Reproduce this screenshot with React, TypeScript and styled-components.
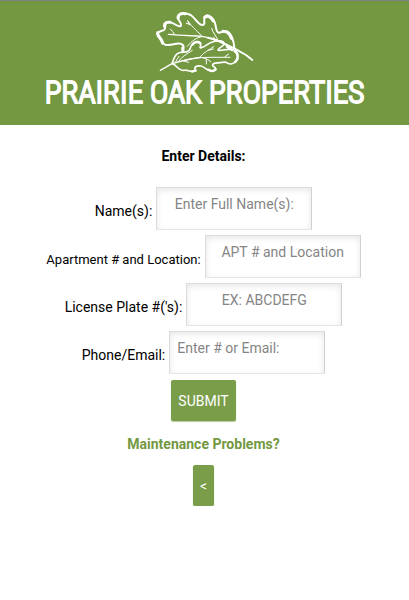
import React from "react";
import styled, { createGlobalStyle } from "styled-components";

const GlobalStyle = createGlobalStyle`
  *, *::before, *::after { box-sizing: border-box; }
  body {
    margin: 0;
    background: #fff;
    color: #000;
    font: 14px/20px Roboto, "Liberation Sans", sans-serif;
  }
`;

const Header = styled.header`
  display: flex;
  flex-direction: column;
  align-items: center;
  padding: 9px 8px 14px;
  border-top: 1px solid #808080;
  background: #739841;
  color: #fff;
`;

const Leaves = styled.svg`
  display: block;
  width: 100px;
  height: 64px;
  fill: none;
  stroke: currentColor;
  stroke-linecap: round;
  stroke-linejoin: round;
`;

const Wordmark = styled.h1`
  margin: 0;
  font: 300 31px/37px "Roboto Condensed", "Liberation Sans Narrow", sans-serif;
  -webkit-text-stroke: 2px currentColor;
  stroke-linejoin: round;
  white-space: nowrap;
`;

const Form = styled.form`
  display: flex;
  flex-direction: column;
  align-items: center;
  gap: 5px;
  padding: 21px 8px 0 6px;
`;

const Title = styled.h2`
  margin: 0 0 16px;
  font-size: 14px;
  line-height: 20px;
`;

const Row = styled.div`
  display: flex;
  align-items: center;
  gap: 4px;
`;

const Label = styled.label<{ $small?: boolean }>`
  padding-top: ${(p) => (p.$small ? 7 : 5)}px;
  font-size: ${(p) => (p.$small ? 13 : 14)}px;
  white-space: nowrap;
`;

const Field = styled.input<{ $align?: "left" | "center" }>`
  width: 156px;
  height: 43px;
  padding: 0 7px 10px;
  border: 1px solid;
  border-color: #dcdcdc #d0d0d0 #e6e6e6 #dcdcdc;
  border-radius: 0;
  background: #fff;
  box-shadow: inset 0 2px 6px rgba(0, 0, 0, 0.1);
  font: inherit;
  text-align: ${(p) => p.$align ?? "center"};

  &::placeholder {
    color: #858585;
    opacity: 1;
  }
`;

const Button = styled.button`
  height: 41px;
  margin-top: 1px;
  padding: 0 7px;
  border: 0;
  border-radius: 2px;
  background: #7a9d49;
  box-shadow: 0 1px 1px rgba(115, 152, 65, 0.5);
  color: #fff;
  font: inherit;
  cursor: pointer;
`;

const Help = styled.a`
  margin: 8px 0 5px;
  color: #739841;
  font-weight: 700;
  text-decoration: none;
`;

const fields: { id: string; label: string; hint: string; small?: boolean; align?: "left" | "center" }[] = [
  { id: "name", label: "Name(s):", hint: "Enter Full Name(s):" },
  { id: "apartment", label: "Apartment # and Location:", hint: "APT # and Location", small: true },
  { id: "plate", label: "License Plate #('s):", hint: "EX: ABCDEFG" },
  { id: "contact", label: "Phone/Email:", hint: "Enter # or Email:", align: "left" },
];

function OakLeaves() {
  return (
    <Leaves viewBox="465 30 300 192" aria-hidden="true">
      <path
        strokeWidth="6"
        d="M703 144C702 123 694 98 679 94C669 91 663 99 656 98C645 96 651 76 641 60C633 47 622 43 615 50C607 58 620 73 608 75C594 76 588 55 572 45C557 37 539 38 535 50C531 61 547 69 543 77C537 86 524 68 508 66C491 65 499 83 493 89C486 95 474 91 472 103C472 114 484 112 486 123C490 138 503 135 514 134C526 132 536 127 544 132C558 139 548 151 547 157"
      />
      <path strokeWidth="9" d="M534 54C534 43 543 39 555 41M614 52C622 44 633 50 640 63M493 78C493 68 500 66 510 67M473 98C471 109 485 114 488 130M548 145L549 154M669 94C682 94 690 102 694 115" />
      <path strokeWidth="4" d="M505 103C541 106 572 107 606 109C630 113 659 123 692 143" />
      <path strokeWidth="6" d="M624 113C655 118 677 134 704 146L738 165L757 180" />
      <path strokeWidth="3" d="M511 87Q518 93 523 102M565 64C572 77 586 87 606 109M559 70L571 73M563 62L568 75M635 85C638 98 648 106 654 121M606 110C589 113 577 121 562 139M650 121L640 111" />
      <path
        strokeWidth="5"
        d="M516 191C522 179 522 164 536 159C546 155 556 159 565 153C575 146 569 138 579 131C590 121 602 124 602 134C602 140 597 145 604 143C619 139 621 131 637 126C651 120 669 122 672 129C675 139 655 142 654 150C660 154 674 147 688 148C705 146 713 156 713 166C716 181 705 189 694 192C676 192 686 183 666 187C651 190 635 188 638 197C645 201 653 209 639 213C622 216 617 201 603 198C587 196 580 204 587 210C583 219 570 214 561 211C548 210 548 213 540 208C531 204 529 195 516 191"
      />
      <path strokeWidth="7" d="M704 154C716 161 715 176 706 185M647 208C640 215 632 214 625 209M587 212L576 214M577 134C586 123 595 125 601 130M681 140L696 150" />
      <path strokeWidth="4" d="M481 211L516 191L557 180L600 172" />
      <path strokeWidth="3" d="M557 180C588 170 643 172 690 172M600 171C611 157 629 149 641 140M624 151L640 147M536 185C545 168 563 162 577 151M526 187L537 169M548 182L566 187M607 173C618 175 627 180 632 185M619 178V192M674 171L686 162" />
    </Leaves>
  );
}

export default function App() {
  return (
    <>
      <GlobalStyle />
      <Header>
        <OakLeaves />
        <Wordmark>PRAIRIE OAK PROPERTIES</Wordmark>
      </Header>
      <main>
        <Form onSubmit={(e) => e.preventDefault()}>
          <Title>Enter Details:</Title>
          {fields.map((f) => (
            <Row key={f.id}>
              <Label htmlFor={f.id} $small={f.small}>{f.label}</Label>
              <Field id={f.id} name={f.id} type="text" placeholder={f.hint} $align={f.align} />
            </Row>
          ))}
          <Button type="submit">SUBMIT</Button>
          <Help href="#maintenance">Maintenance Problems?</Help>
          <Button type="button" aria-label="Back">&lt;</Button>
        </Form>
      </main>
    </>
  );
}
